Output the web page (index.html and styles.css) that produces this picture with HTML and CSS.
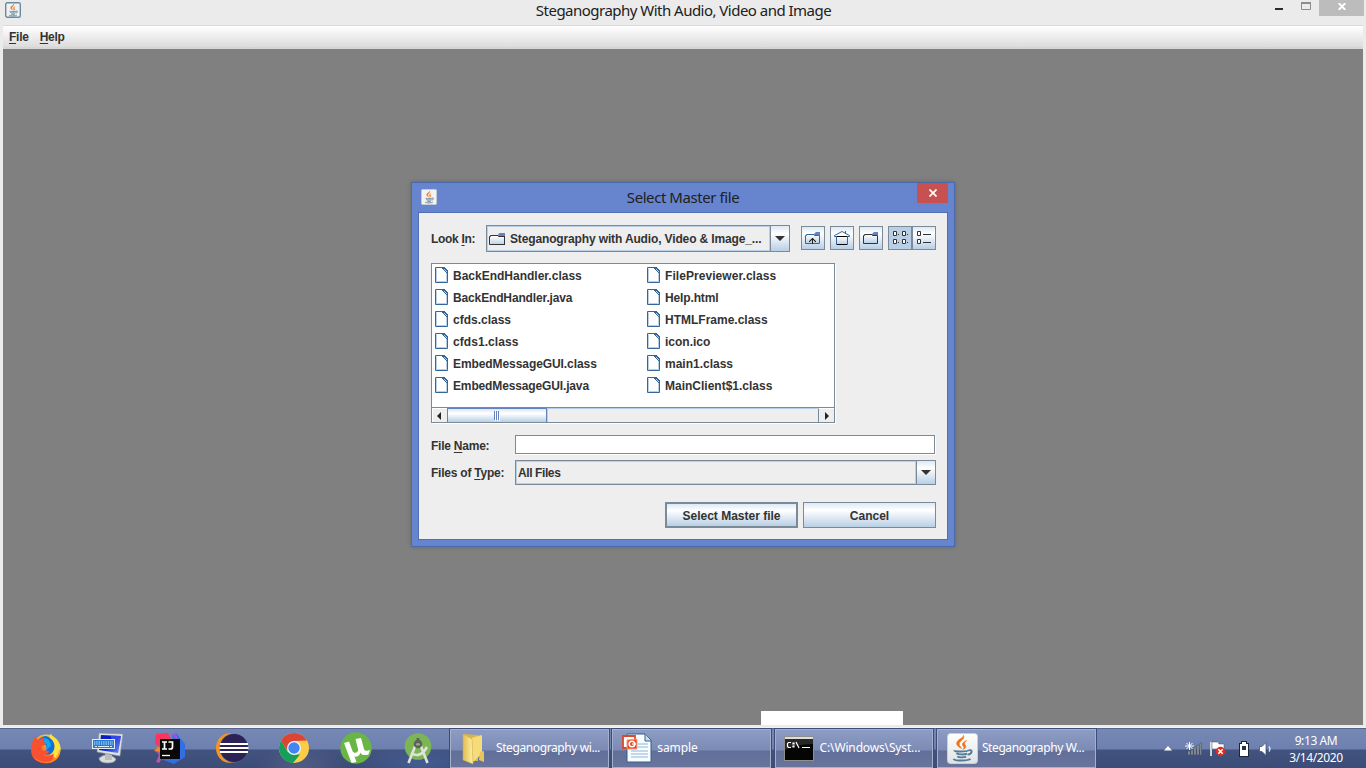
FILE: index.html
```html
<!DOCTYPE html>
<html lang="en">
<head>
<meta charset="utf-8">
<title>Steganography With Audio, Video and Image</title>
<link rel="stylesheet" href="styles.css">
</head>
<body>
<svg class="defs" width="0" height="0">
  <defs>
    <linearGradient id="paper" x2="0" y2="1"><stop offset="0" stop-color="#fff"/><stop offset="1" stop-color="#dfe3e5"/></linearGradient>
    <linearGradient id="steel" x2="0" y2="1"><stop offset="0" stop-color="#fff"/><stop offset="1" stop-color="#b8cfe5"/></linearGradient>
    <linearGradient id="gold" x2="1" y2="0"><stop offset="0" stop-color="#e2bd4c"/><stop offset="1" stop-color="#fff0a6"/></linearGradient>
    <linearGradient id="fire" x1="1" y1="0" x2="0" y2="1"><stop offset="0" stop-color="#fff44f"/><stop offset=".35" stop-color="#ffb52a"/><stop offset=".65" stop-color="#ff5a30"/><stop offset="1" stop-color="#e6254e"/></linearGradient>
    <linearGradient id="screen" x2="1" y2="1"><stop offset="0" stop-color="#1020b0"/><stop offset=".5" stop-color="#0618dc"/><stop offset="1" stop-color="#6f9cff"/></linearGradient>
    <symbol id="java" viewBox="0 0 32 32">
      <path d="M17.500 2.500c2.500 4.500-6 6.500-4.300 10.500.7 1.500 2 2.500 2.300 3.500-4-2-6.500-4.500-4.500-7.500s6.500-3.500 6.500-6.500zM21 8c-4.500 2-5.500 4-3.500 6 1 1 .8 2.300-.5 3.500 4-2 3.500-3.300 2.200-5-1-1.500-.3-3 1.800-4.500z" fill="#ee7318" stroke="#ee7318" stroke-width=".6"/>
      <g fill="none" stroke="#537b96" stroke-width="2"><path d="M8 18.500c-1 1.700 13 1.700 15 0M10 21.700c2 1.500 9 1.500 11.500.3M11 25c2 1.300 7 1.200 9.500.2M7 27.500c1 2.500 16 2.500 18 0M23 18.500c5-1.500 4 4-1 4.500"/></g>
    </symbol>
    <symbol id="file" viewBox="0 0 13 16">
      <path d="M.5.500h7l5 5v10H.5z" fill="#fff" stroke="#336699"/><path d="M1.500 14.500h10v-9M1.500 1.500v13" fill="none" stroke="#b8cfe5"/>
      <path d="M7 0h3v1h1v1h1v1h1v4h-1V6h-1V5h-1V4H9V3H8V2H7z" fill="#336699"/><path d="M9 2h1v1H9zM10 3h1v1h-1zM11 4h1v1h-1z" fill="#b8cfe5"/>
    </symbol>
  </defs>
</svg>

<main class="window">
  <header class="titlebar">
    <svg class="app-icon" viewBox="0 0 16 16"><rect x=".7" y=".7" width="14.600" height="14.600" rx="1.500" fill="#eff1f2" stroke="#6b8ba0" stroke-width="1.400"/><use href="#java" x="1" y="1" width="14" height="14"/></svg>
    <h1 class="title main-title">Steganography With Audio, Video and Image</h1>
    <div class="caption">
      <svg width="8" height="2"><path d="M0 0h8v2H0z" fill="#2a2a2a"/></svg>
      <svg width="10" height="8"><path d="M.5 1v6.500h9V1" fill="none" stroke="#8d8d8d"/><path d="M0 0h10v2H0z" fill="#8d8d8d"/></svg>
      <span class="main-close"><svg width="8" height="7" viewBox="0 0 8 7"><path d="M.7 0l6.600 7M7.300 0L.7 7" stroke="#fff" stroke-width="1.900"/></svg></span>
    </div>
  </header>
  <nav class="menubar"><span><u>F</u>ile</span><span><u>H</u>elp</span></nav>
  <div class="canvas"></div>
  <div class="blank-tip"></div>
</main>

<section class="dialog">
  <header class="dialog-title">
    <svg class="app-icon" viewBox="0 0 16 16"><rect x=".5" y=".5" width="15" height="15" rx="1" fill="#f3f3f3" stroke="#c3cad0"/><use href="#java" x="1" y="1" width="14" height="14"/></svg>
    <h2 class="title dlg-title">Select Master file</h2>
    <span class="dlg-close"><svg width="8" height="8" viewBox="0 0 8 8"><path d="M.5.500l7 7M7.500.5l-7 7" stroke="#fff" stroke-width="1.700"/></svg></span>
  </header>
  <div class="dialog-body">
    <div class="look-row">
      <span class="look-label">Look <u>I</u>n:</span>
      <div class="combo look-combo">
        <div class="combo-value"><svg width="17" height="14" viewBox="0 0 17 14"><path d="M1.500 4h14.500v9H1.500z" fill="url(#steel)"/><path d="M.5 12.500v-8h1v-1h8v1h6v8z" fill="none" stroke="#333"/><path d="M9 4V2.500L10.500 1H16v3z" fill="#6382bf"/><path d="M15.500 4v9" stroke="#333"/></svg><span class="folder-name">Steganography with Audio, Video &amp; Image_...</span></div>
        <div class="combo-arrow"><svg width="10" height="5"><path d="M0 0h10L5 5z" fill="#333"/></svg></div>
      </div>
      <div class="tools">
        <span class="tool"><svg width="16" height="16" viewBox="0 0 16 16"><path d="M.5 13.500v-8h1v-1h8v1h5v8z" fill="url(#steel)" stroke="#336699"/><path d="M9.500 5V3.500L11 2h4v3z" fill="#6382bf"/><path d="M7.500 14V8M4 11.500h1v-1h1v-1h1v-1h1v1h1v1h1v1h1" fill="none" stroke="#222"/></svg></span>
        <span class="tool"><svg width="16" height="16" viewBox="0 0 16 16"><path d="M2.500 6.500h11v8h-11z" fill="url(#steel)" stroke="#336699"/><path d="M.5 6.500v-1L8 1.500l7.500 4v1z" fill="#fff" stroke="#336699"/><path d="M3 14.500h10M3 6.500h10" stroke="#000"/><path d="M11.500 1v3" stroke="#336699"/></svg></span>
        <span class="tool"><svg width="16" height="16" viewBox="0 0 16 16"><path d="M.5 13.500v-8h1v-1h8v1h5v8z" fill="url(#steel)" stroke="#333"/><path d="M9.500 5V3.500L11 2h4v3z" fill="#6382bf"/></svg></span>
        <span class="tool pressed"><svg width="16" height="16" viewBox="0 0 16 16"><g fill="#fff" stroke="#333"><path d="M1.500 1.500h3v4h-3zM10.500 1.500h3v4h-3zM1.500 9.500h3v4h-3zM10.500 9.500h3v4h-3z"/></g><path d="M6 4h1v1H6zM15 4h1v1h-1zM6 12h1v1H6zM15 12h1v1h-1z" fill="#333"/></svg></span>
        <span class="tool last"><svg width="16" height="16" viewBox="0 0 16 16"><g fill="#fff" stroke="#333"><path d="M1.500 1.500h3v4h-3zM1.500 9.500h3v4h-3zM7 4.500h8M7 12.500h8"/></g></svg></span>
      </div>
    </div>

    <div class="file-pane">
      <div class="file-grid">
        <div class="file"><svg class="fi"><use href="#file"/></svg><span>BackEndHandler.class</span></div>
        <div class="file tight"><svg class="fi"><use href="#file"/></svg><span>BackEndHandler.java</span></div>
        <div class="file"><svg class="fi"><use href="#file"/></svg><span>cfds.class</span></div>
        <div class="file wide"><svg class="fi"><use href="#file"/></svg><span>cfds1.class</span></div>
        <div class="file"><svg class="fi"><use href="#file"/></svg><span class="snug">EmbedMessageGUI.class</span></div>
        <div class="file tight"><svg class="fi"><use href="#file"/></svg><span>EmbedMessageGUI.java</span></div>
        <div class="file wide"><svg class="fi"><use href="#file"/></svg><span>FilePreviewer.class</span></div>
        <div class="file tight"><svg class="fi"><use href="#file"/></svg><span>Help.html</span></div>
        <div class="file"><svg class="fi"><use href="#file"/></svg><span>HTMLFrame.class</span></div>
        <div class="file"><svg class="fi"><use href="#file"/></svg><span>icon.ico</span></div>
        <div class="file"><svg class="fi"><use href="#file"/></svg><span>main1.class</span></div>
        <div class="file"><svg class="fi"><use href="#file"/></svg><span>MainClient$1.class</span></div>
      </div>
      <div class="scrollbar">
        <span class="sb-btn left"><svg width="4" height="8"><path d="M4 0v8L0 4z" fill="#222"/></svg></span>
        <span class="thumb"><svg width="6" height="10"><path d="M.5 0v9M2.500 0v9M4.500 0v9" stroke="#6382bf"/><path d="M1.500 1v9M3.500 1v9M5.500 1v9" stroke="#fff"/></svg></span>
        <span class="track"></span>
        <span class="sb-btn right"><svg width="4" height="8"><path d="M0 0v8l4-4z" fill="#222"/></svg></span>
      </div>
    </div>

    <div class="form-row name-row"><span class="form-label">File <u>N</u>ame:</span><input class="name-field" type="text"></div>
    <div class="form-row type-row"><span class="form-label">Files of <u>T</u>ype:</span>
      <div class="combo type-combo"><div class="combo-value"><span class="type-value">All Files</span></div><div class="combo-arrow"><svg width="10" height="5"><path d="M0 0h10L5 5z" fill="#333"/></svg></div></div>
    </div>
    <div class="actions"><button class="btn default">Select Master file</button><button class="btn">Cancel</button></div>
  </div>
</section>

<footer class="taskbar">
  <div class="launch">
    <span><svg width="32" height="32" viewBox="0 0 32 32"><circle cx="16" cy="17" r="14.500" fill="url(#fire)"/><path d="M21 1c0 4 8 6 9.300 14 .6 4-1 9-4 12L20 22c5-4 4-10 0-12-1-3 0-6 1-9z" fill="#ffe23c"/><path d="M9 7q7-6 12 0c4 3 5 10 1 14-4 3-9 1-10-1l5-2-1-5-7-2z" fill="#0c6fe0"/><path d="M14 6q6 0 7 8l-5 4 1-5-4-3z" fill="#14a5f5"/><path d="M1 18C1 13 2 10 4 8l.5-3 4 3 5-3-.3 5 3 1c-1 2.500-4 2-5 4l1 3c2 2 4 0 7 1-1 4-5 4-8 3 4 4 10 3 12-1 2 6-4 10-9 10C7 31 1 26 1 18z" fill="#f9502f"/><path d="M3 24c5 6 14 8 21 3 3-3 5-6 5.500-10 2 8-4 14-13.500 14C10 31 5 28 3 24z" fill="#ff8a2b" opacity=".75"/></svg></span>
    <span><svg width="34" height="32" viewBox="0 0 34 32"><path d="M8 26q9-7 17 1-1 4-8 4-9 0-9-5z" fill="#d9dcda" stroke="#8f9599" stroke-width=".6"/><path d="M14 21l7 2v5h-7z" fill="#b9bebd"/><path d="M8 1l24 1-3 22L6 20z" fill="#dfe1dc" stroke="#8a8f95" stroke-width=".6"/><path d="M10 3l20 1-3 17L8 18z" fill="url(#screen)"/><path d="M19 3l11 1-3 17z" fill="#6278e8" opacity=".5"/><rect x="1.500" y="7.500" width="22" height="9" fill="#247bd0" stroke="#e8edf2"/><path d="M3 10h19M3 12h19" stroke="#d6efff" stroke-width="1.100" stroke-dasharray="1.300 1"/><path d="M4 14.500h17" stroke="#d6efff" stroke-dasharray="2 1 11 1 2"/></svg></span>
    <span><svg width="32" height="32" viewBox="0 0 32 32"><path d="M2 2l12-1 4 8-11 8-6-6z" fill="#fb365f"/><path d="M1 18l6-4 3 9-5 8-3-1 3-7z" fill="#b457a5"/><path d="M0 19l5-5 2 6z" fill="#f58529"/><path d="M18 3l4-2 9 11v13L20 32 7 27l14-8z" fill="#316fe5"/><path d="M18 3l4-2 2 8z" fill="#9a55e3"/><rect x="6" y="7" width="20" height="20" fill="#080808"/><path d="M8 10h5M10.500 10v7M8 17h5M14.500 10h4v5q0 2-2 2h-2" fill="none" stroke="#fff" stroke-width="1.700"/><path d="M8 23.500h8" stroke="#fff" stroke-width="1.300"/></svg></span>
    <span><svg width="34" height="32" viewBox="0 0 34 32"><ellipse cx="14.500" cy="16" rx="13.500" ry="14.700" fill="#f7941e"/><circle cx="18.800" cy="16" r="14.500" fill="#65739c"/><circle cx="19" cy="16" r="14" fill="#2c2255"/><path d="M5 12h28M4.500 16h29M5 20h28" stroke="#fff" stroke-width="1.900"/></svg></span>
    <span><svg width="32" height="32" viewBox="0 0 32 32"><circle cx="16" cy="16" r="15" fill="#fdcd46"/><path d="M3 8.500A15 15 0 0 1 29 8.500L16 9l-6.500 10z" fill="#db4437"/><path d="M3 8.500l6.500 11 6.500 3h6L15 31A15 15 0 0 1 3 8.500z" fill="#159f5b"/><circle cx="16" cy="16" r="7" fill="#f4f4f4"/><circle cx="16" cy="16" r="5.700" fill="#4285f4"/></svg></span>
    <span><svg width="34" height="32" viewBox="0 0 34 32"><circle cx="17" cy="16" r="15.700" fill="#69b645"/><path d="M5 11l5-1.500 3.500 9.500c1 3 6.500 2 5.500-2l-2.500-10 5.500-1 3 11c1 2.500 3.500 2 6 1l-1.500 4.500c-4 1-7 1-8-2-1 4-4 4.500-6 4l2 5.500-5 1z" fill="#fff"/></svg></span>
    <span><svg width="32" height="32" viewBox="0 0 32 32"><circle cx="16" cy="14.500" r="13.300" fill="#7cb654"/><path d="M14 12L6.500 31M18 12l7.500 19M9 21q9 6 16-6" fill="none" stroke="#dfe2df" stroke-width="2.600"/><circle cx="16" cy="12" r="3" fill="none" stroke="#5d625e" stroke-width="2.500"/><path d="M16 6v5" stroke="#5d625e" stroke-width="3"/></svg></span>
  </div>
  <div class="tasks">
    <div class="task folder-task"><svg width="24" height="33" viewBox="0 0 24 33"><path d="M1 2l15 1v26H3z" fill="#d8b64d"/><path d="M10 6l9-3 1 1v18l-9 8z" fill="#f6dc79"/><path d="M1 2l9 5 1 25-10-4z" fill="url(#gold)" stroke="#ceac46" stroke-width=".5"/><path d="M18 20l4-1v11l-5-2z" fill="#e5c55c"/></svg><span>Steganography wi...</span></div>
    <div class="task sample-task"><svg width="30" height="30" viewBox="0 0 30 30"><path d="M5 1h18l6 6v22H5z" fill="#f9fcff" stroke="#345e8d"/><path d="M23 1v7h6" fill="#c5ddee" stroke="#345e8d"/><path d="M16 11h10M16 14h10M9 18h17M9 21h17M9 24h17" stroke="#8db3d6" stroke-width="1.200"/><path d="M1 3h12v12H1z" fill="#fff" stroke="#db4928" stroke-width="1.800"/><path d="M5 7l10-1v10H5z" fill="#e44b25" stroke="#f5a184"/><circle cx="10" cy="11" r="2.800" fill="none" stroke="#fff" stroke-width="1.500"/><path d="M10 11h4" stroke="#fff" stroke-width="1.200"/></svg><span>sample</span></div>
    <div class="task console-task"><svg width="30" height="25" viewBox="0 0 30 25"><rect x=".5" y=".5" width="29" height="24" fill="#050505" stroke="#8e908f"/><path d="M1 1h28v2H1z" fill="#ddd"/><path d="M1 3h28v5Q12 8 1 14z" fill="#444" opacity=".55"/><path d="M7 6.500H4.500l-1 1v3l1 1H7M9 7h1v1H9zM9 10h1v1H9zM12 6l3 6M18 11.500h8" fill="none" stroke="#fff" stroke-width="1.200"/></svg><span>C:\Windows\Syst...</span></div>
    <div class="task java-task"><svg width="31" height="31" viewBox="0 0 31 31"><rect x=".5" y=".5" width="30" height="30" rx="3" fill="url(#paper)" stroke="#c7d0da"/><use href="#java" x="0" y="0" width="30" height="30"/></svg><span>Steganography W...</span></div>
  </div>
  <div class="tray">
    <svg width="8" height="5"><path d="M4 0l4 4.500H0z" fill="#fff"/></svg>
    <svg class="network" width="17" height="14" viewBox="0 0 17 14"><path d="M3 9h2v4H3zM6 8h2v5H6zM9 5h2v8H9zM12 3h2v10h-2zM15 1h1.500v12H15z" fill="#9299a4" stroke="#414a61" stroke-width=".5"/><path d="M4.500 0v8M1.500 1l6 6M1.500 7l6-6M0 4h9" stroke="#fff"/></svg>
    <svg class="flag" width="16" height="16" viewBox="0 0 16 16"><path d="M1 1v14" stroke="#fff" stroke-width="1.500"/><path d="M2 1h6l1 2h5v7H8L7 8H2z" fill="#fff" stroke="#454e65" stroke-width=".5"/><circle cx="10.500" cy="10.500" r="4.700" fill="#dd2c20"/><path d="M8.300 8.300l4.400 4.400M12.700 8.300l-4.400 4.400" stroke="#fff" stroke-width="1.500"/></svg>
    <svg class="battery" width="10" height="16" viewBox="0 0 10 16"><path d="M2 0h6v2h2v14H0V2h2z" fill="#1c2438"/><path d="M3 1h4v2h2v12H1V3h2z" fill="#fff"/><path d="M3 5h4v4H3z" fill="#26304d"/></svg>
    <svg class="volume" width="14" height="14" viewBox="0 0 14 14"><path d="M.5 4.500h2.500L7 .5v13l-4-4H.5z" fill="#fff" stroke="#39466b" stroke-width=".7"/><path d="M10 4.500q2 2.500 0 5" fill="none" stroke="#dce3f0" stroke-width="1.300"/></svg>
    <div class="clock"><span class="time">9:13 AM</span><span class="date">3/14/2020</span></div>
  </div>
</footer>
</body>
</html>
```
FILE: styles.css
```css
* { box-sizing: border-box; }
body { margin: 0; width: 1366px; height: 768px; overflow: hidden; display: flex; flex-direction: column; position: relative; background: #ebebeb; color: #333; font: bold 12px "Liberation Sans", Arial, sans-serif; }
svg { display: block; flex: none; }
.defs { position: absolute; }
u { text-decoration: underline; text-underline-offset: 2px; text-decoration-thickness: 1px; }
.window { height: 728px; display: flex; flex-direction: column; position: relative; padding: 0 3px; border-bottom: 1px solid #f2f2f2; }
.titlebar { height: 25px; display: flex; }
.app-icon { width: 16px; height: 16px; }
.titlebar .app-icon { margin: 2px 0 0 2px; }
.title { margin: 0; flex: 1; text-align: center; font: 15px/20px "Noto Sans", "Open Sans", sans-serif; color: #202020; white-space: nowrap; }
.main-title { padding-left: 71px; letter-spacing: -.52px; }
.caption { display: flex; width: 91px; height: 16px; margin-right: -3px; gap: 18px; }
.caption > svg:first-child { margin-top: 8px; }
.caption > svg:nth-child(2) { margin-top: 2px; }
.main-close { width: 45px; height: 16px; margin-left: -10px; flex: none; background: #bcbcbc; display: flex; align-items: center; justify-content: center; padding-bottom: 3px; }
.menubar { height: 24px; display: flex; gap: 11px; padding: 4px 6px; line-height: 14px; letter-spacing: -.25px; background: linear-gradient(#fff, #dcdcdc); border-top: 1px solid #dadada; border-bottom: 2px solid #d6d6d6; }
.canvas { height: 676px; background: #808080; }
.blank-tip { position: absolute; left: 761px; top: 711px; width: 142px; height: 14px; background: #fff; }

.dialog { position: absolute; left: 411px; top: 182px; width: 544px; height: 365px; background: #6785cf; border: 1px solid #4969aa; padding: 0 6px 6px; box-shadow: 0 0 4px #666; }
.dialog-title { height: 29px; display: flex; }
.dialog-title .app-icon { margin: 6px 0 0 3px; }
.dlg-title { line-height: 29px; padding-left: 12px; letter-spacing: -.43px; }
.dlg-close { width: 31px; height: 20px; background: #c75050; display: flex; align-items: center; justify-content: center; }
.dialog-body { height: 328px; border: 1px solid #4f6fb2; background: #eee; padding: 12px 11px 11px 12px; display: flex; flex-direction: column; }
.look-row { display: flex; height: 27px; }
.look-label { width: 55px; line-height: 28px; letter-spacing: -.3px; white-space: nowrap; }
.combo { border: 1px solid #7a8a99; display: flex; }
.look-combo { width: 304px; }
.combo-value { flex: 1; border: 1px solid #b8cfe5; display: flex; align-items: center; gap: 4px; padding-left: 1px; white-space: nowrap; }
.folder-name { letter-spacing: -.14px; }
.combo-arrow { width: 19px; border-left: 1px solid #7a8a99; display: flex; align-items: center; justify-content: center; background: linear-gradient(#dde8f3, #fff 30%, #b8cfe5); }
.tools { display: flex; gap: 5px; padding: 1px 0 0 11px; }
.tool { width: 24px; height: 24px; border: 1px solid #7a8a99; display: flex; align-items: center; justify-content: center; background: linear-gradient(#dde8f3, #fff 30%, #b8cfe5); }
.pressed { background: #b8cfe5; }
.last { margin-left: -5px; }
.file-pane { width: 404px; height: 160px; margin-top: 11px; border: 1px solid #7a8a99; background: #fff; box-shadow: 1px 1px #fff; display: flex; flex-direction: column; }
.file-grid { height: 143px; display: grid; grid-template-columns: 212px 190px; grid-template-rows: repeat(6, 22px); grid-auto-flow: column; }
.file { display: flex; align-items: center; gap: 5px; padding-left: 3px; white-space: nowrap; }
.file span { padding-top: 2px; }
.snug { letter-spacing: -.08px; }
.tight { letter-spacing: -.14px; }
.wide { letter-spacing: .06px; }
.fi { width: 13px; height: 16px; }
.scrollbar { height: 15px; border-top: 1px solid #7a8a99; display: flex; background: #eee; }
.sb-btn { width: 15px; display: flex; align-items: center; justify-content: center; border-top: 1px solid #fff; border-left: 1px solid #fff; }
.sb-btn.left { padding-right: 2px; }
.sb-btn.right { width: 16px; border-left: 1px solid #7a8a99; }
.thumb { width: 100px; border: 1px solid #6382bf; border-bottom: 0; display: flex; align-items: center; justify-content: center; background: linear-gradient(#dde8f3, #fff 35%, #b8cfe5); }
.track { flex: 1; border-top: 1px solid #b8cfe5; border-left: 1px solid #b8cfe5; }
.form-row { display: flex; }
.form-label { width: 84px; letter-spacing: -.23px; white-space: nowrap; }
.name-row { height: 20px; margin-top: 12px; line-height: 22px; }
.name-field { width: 420px; height: 19px; border: 1px solid #7a8a99; border-radius: 0; outline: 0; padding: 0; background: #fff; box-shadow: 1px 1px #fff; }
.type-row { height: 25px; margin-top: 5px; line-height: 26px; }
.type-combo { width: 421px; line-height: 22px; }
.type-value { padding-top: 1px; letter-spacing: -.4px; }
.type-combo .combo-arrow { width: 19.500px; }
.actions { display: flex; justify-content: flex-end; gap: 5px; margin-top: 17px; }
.btn { width: 133px; height: 26px; padding: 1px 0 0; border: 1px solid #7a8a99; border-radius: 0; font: inherit; color: #333; background: linear-gradient(#dde8f3, #fff 30%, #b8cfe5); }
.btn.default { border-width: 2px; }

.taskbar { height: 40px; display: flex; background: radial-gradient(ellipse 45px 26px at 300px 42px, #8080a055, transparent), radial-gradient(ellipse 65px 20px at 420px 36px, #4a70b866, transparent), linear-gradient(#7688b5 0, #6d80af 20px, #42537e 21px, #3c4c78); border-top: 1px solid #55658e; color: #fff; font: 12px "Noto Sans", "Open Sans", sans-serif; }
.launch { display: flex; flex: none; width: 450px; padding: 0 0 2px 15px; }
.launch > span { width: 62px; display: flex; align-items: center; justify-content: center; }
.tasks { display: flex; flex: none; gap: 3.500px; width: 646px; }
.task { flex: none; width: 158.800px; height: 39px; padding-bottom: 1px; border: 1px solid #a5b1cc; box-shadow: 0 0 0 1px #3d4d78; display: flex; align-items: center; background: linear-gradient(#8d9cc3 0, #7b8bb5 20px, #626f99 21px, #68749b); white-space: nowrap; }
.task span { margin-bottom: 1px; letter-spacing: -.1px; }
.folder-task { padding-left: 11px; gap: 10px; }
.folder-task span, .java-task span { letter-spacing: -.4px; }
.console-task span { letter-spacing: -.15px; }
.sample-task { padding-left: 9px; gap: 5px; }
.console-task { padding-left: 8px; gap: 6px; }
.java-task { padding-left: 9px; gap: 4px; }
.tray { flex: 1; display: flex; align-items: center; padding-left: 68px; }
.network { margin-left: 13px; }
.flag { margin-left: 8px; }
.battery { margin-left: 13px; }
.volume { margin-left: 10px; }
.clock { display: flex; flex-direction: column; width: 60px; margin-left: 13px; text-align: center; line-height: 17px; white-space: nowrap; letter-spacing: -.4px; }
```
